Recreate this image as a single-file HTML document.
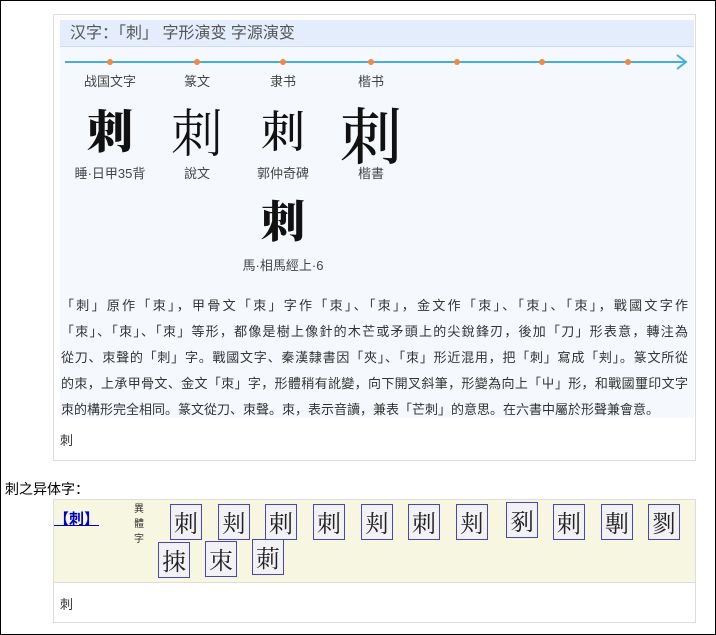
<!DOCTYPE html>
<html><head><meta charset="utf-8"><style>
body{margin:0;width:716px;height:635px;position:relative;background:#fff;font-family:"Liberation Sans","Noto Sans CJK SC",sans-serif;overflow:hidden}
.frame{position:absolute;left:0;top:0;width:714px;height:633px;border:1px solid #000}
.a{position:absolute;white-space:nowrap}
.box1{position:absolute;left:53px;top:14px;width:641px;height:445px;border:1px solid #ddd;background:#fff}
.panel{position:absolute;left:6px;top:5px;width:634px;height:398px;background:#f5f8fd}
.hdr{position:absolute;left:0;top:0;width:634px;height:27px;background:#e3edfb;border-bottom:1px solid #d0dcee;font-size:16px;color:#555;line-height:27px;padding-left:10px;box-sizing:border-box}
.lab{font-size:13px;color:#444;transform:translateX(-50%)}
.big{font-family:"Noto Serif CJK SC",serif;font-weight:900;color:#111;transform:translateX(-50%)}
.txt{position:absolute;left:7px;top:278px;width:627px;font-size:13px;line-height:26px;color:#333}
.txt div{text-align:justify;text-align-last:justify;white-space:nowrap}
.txt div.l{text-align-last:left}
.v{position:absolute;width:30px;height:34px;border:1px solid #4646b4;background:#f2f2f6;font-family:"Noto Serif CJK SC",serif;font-size:24px;line-height:34px;text-align:center;color:#222}
</style></head><body>
<div class="frame"></div>
<div class="box1">
 <div class="panel">
  <div class="hdr">汉字：「刺」 字形演变 字源演变</div>
  <svg class="a" style="left:0;top:33px" width="634" height="20">
   <line x1="5" y1="9" x2="626" y2="9" stroke="#45aee0" stroke-width="2"/>
   <polyline points="617,2 626,9 617,16" fill="none" stroke="#45aee0" stroke-width="2"/>
   <g fill="#f08a3c"><circle cx="50" cy="9" r="3"/><circle cx="137" cy="9" r="3"/><circle cx="223" cy="9" r="3"/><circle cx="311" cy="9" r="3"/><circle cx="397" cy="9" r="3"/><circle cx="482" cy="9" r="3"/><circle cx="568" cy="9" r="3"/></g>
  </svg>
  <div class="a lab" style="left:50px;top:51px">战国文字</div>
  <div class="a lab" style="left:137px;top:51px">篆文</div>
  <div class="a lab" style="left:223px;top:51px">隶书</div>
  <div class="a lab" style="left:311px;top:51px">楷书</div>
  <div class="a big" style="left:50px;top:76px;font-size:46px">刺</div>
  <div class="a big" style="left:137px;top:72px;font-size:52px;font-weight:300">刺</div>
  <div class="a big" style="left:223px;top:76px;font-size:44px;font-weight:500">刺</div>
  <div class="a big" style="left:311px;top:68px;font-size:62px;font-weight:500">刺</div>
  <div class="a lab" style="left:50px;top:143px">睡·日甲35背</div>
  <div class="a lab" style="left:137px;top:143px">說文</div>
  <div class="a lab" style="left:223px;top:143px">郭仲奇碑</div>
  <div class="a lab" style="left:311px;top:143px">楷書</div>
  <div class="a big" style="left:223px;top:166px;font-size:44px">刺</div>
  <div class="a lab" style="left:223px;top:235px">馬·相馬經上·6</div>
 </div>
 <div class="txt">
  <div>「刺」原作「朿」，甲骨文「朿」字作「朿」、「朿」，金文作「朿」、「朿」、「朿」，戰國文字作</div>
  <div>「朿」、「朿」、「朿」等形，都像是樹上像針的木芒或矛頭上的尖銳鋒刃，後加「刀」形表意，轉注為</div>
  <div>從刀、朿聲的「刺」字。戰國文字、秦漢隸書因「夾」、「朿」形近混用，把「刺」寫成「刾」。篆文所從</div>
  <div>的朿，上承甲骨文、金文「朿」字，形體稍有訛變，向下開叉斜筆，形變為向上「屮」形，和戰國璽印文字</div>
  <div class="l">朿的構形完全相同。篆文從刀、朿聲。朿，表示音讀，兼表「芒刺」的意思。在六書中屬於形聲兼會意。</div>
 </div>
 <div class="a" style="left:6px;top:415px;font-size:13px;color:#333">刺</div>
</div>
<div class="a" style="left:5px;top:479px;font-size:14px;color:#000">刺之异体字：</div>
<div style="position:absolute;left:53px;top:499px;width:641px;height:122px;border:1px solid #ddd;background:#fff">
 <div style="position:absolute;left:0;top:0;width:641px;height:82px;background:#f7f7e1;border-bottom:1px solid #ddd"></div>
 <div class="a" style="left:0;top:8px;font-size:15px;font-weight:bold;color:#00c;text-decoration:underline">【刺】</div>
 <div class="a" style="left:80px;top:2px;font-size:10px;line-height:15px;color:#333;white-space:normal;width:12px">異體字</div>
 <div class="v" style="left:116px;top:4px">刺</div>
 <div class="v" style="left:164px;top:4px">刾</div>
 <div class="v" style="left:211px;top:4px">剌</div>
 <div class="v" style="left:259px;top:4px">刺</div>
 <div class="v" style="left:307px;top:4px">刾</div>
 <div class="v" style="left:354px;top:4px">刺</div>
 <div class="v" style="left:402px;top:4px">刾</div>
 <div class="v" style="left:452px;top:2px">剢</div>
 <div class="v" style="left:499px;top:4px">剌</div>
 <div class="v" style="left:547px;top:4px">剸</div>
 <div class="v" style="left:594px;top:4px">剹</div>
 <div class="v" style="left:104px;top:42px">拺</div>
 <div class="v" style="left:151px;top:41px">朿</div>
 <div class="v" style="left:198px;top:39px">莿</div>
 <div class="a" style="left:6px;top:94px;font-size:13px;color:#333">刺</div>
</div>
</body></html>
